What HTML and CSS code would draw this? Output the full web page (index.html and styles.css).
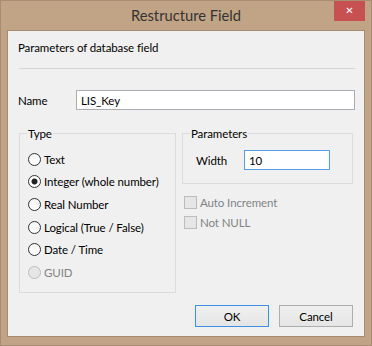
FILE: index.html
```html
<!DOCTYPE html>
<html>
<head>
    <title>Restructure Field</title>
    <link rel="stylesheet" href="styles.css">
</head>
<body>
    <div class="window">
        <div class="titlebar">
            <span class="title">Restructure Field</span>
            <span class="close-btn">&#x2715;</span>
        </div>
        <div class="client">
            <div class="heading">Parameters of database field</div>
            <div class="separator"></div>

            <div class="name-row">
                <label class="name-label" for="fieldName">Name</label>
                <input class="text-input" type="text" id="fieldName" value="LIS_Key">
            </div>

            <div class="groups">
                <!-- Field type -->
                <fieldset class="group type-group">
                    <legend>Type</legend>
                    <label class="option"><input type="radio" name="ftype"> Text</label>
                    <label class="option"><input type="radio" name="ftype" checked> Integer (whole number)</label>
                    <label class="option"><input type="radio" name="ftype"> Real Number</label>
                    <label class="option"><input type="radio" name="ftype"> Logical (True / False)</label>
                    <label class="option"><input type="radio" name="ftype"> Date / Time</label>
                    <label class="option disabled"><input type="radio" name="ftype" disabled> GUID</label>
                </fieldset>

                <div class="right-col">
                    <fieldset class="group params-group">
                        <legend>Parameters</legend>
                        <div class="width-row">
                            <label class="width-label" for="fieldWidth">Width</label>
                            <input class="text-input width-input" type="text" id="fieldWidth" value="10">
                        </div>
                    </fieldset>
                    <div class="checks">
                        <label class="check disabled"><input type="checkbox" disabled> Auto Increment</label>
                        <label class="check disabled"><input type="checkbox" disabled> Not NULL</label>
                    </div>
                </div>
            </div>

            <div class="buttons">
                <button class="btn btn-default">OK</button>
                <button class="btn">Cancel</button>
            </div>
        </div>
    </div>
</body>
</html>
```

FILE: styles.css
```css
body {
    margin: 0;
    padding: 0;
    font-family: Lato, "Noto Sans", sans-serif;
    font-size: 11.5px;
    letter-spacing: -0.1px;
    color: #000;
}

/* Window frame */
.window {
    width: 372px;
    height: 346px;
    box-sizing: border-box;
    background-color: #c1a386;
    border: 1px solid #a88d72;
    padding: 0 6px 8px 6px;
    display: flex;
    flex-direction: column;
}

.titlebar {
    height: 29px;
    position: relative;
    text-align: center;
}

.title {
    font-size: 14.7px;
    letter-spacing: 0;
    line-height: 29px;
    color: #333;
}

.close-btn {
    position: absolute;
    top: 0;
    right: 0;
    width: 31px;
    height: 20px;
    background-color: #c75050;
    color: #fff;
    font-family: "DejaVu Sans", sans-serif;
    font-size: 10px;
    font-weight: bold;
    line-height: 20px;
    text-align: center;
}

/* Client area */
.client {
    flex: 1;
    background-color: #f0f0f0;
    border: 1px solid #a58b70;
    display: flex;
    flex-direction: column;
}

.heading {
    margin: 9px 0 0 10px;
    line-height: 16px;
}

.separator {
    margin: 12px 9px 0 11px;
    border-top: 1px solid #d5d5d5;
}

.name-row {
    display: flex;
    align-items: center;
    margin: 21px 9px 0 10px;
}

.name-label {
    width: 58px;
}

.text-input {
    box-sizing: border-box;
    height: 20px;
    border: 1px solid #abadb3;
    background: #fff;
    padding: 0 4px;
    font-family: inherit;
    font-size: 11.5px;
    letter-spacing: -0.1px;
    color: #000;
    outline: none;
}

.name-row .text-input {
    flex: 1;
}

/* Group boxes */
.groups {
    display: grid;
    grid-template-columns: 157px 171px;
    column-gap: 6px;
    align-items: start;
    margin: 16px 0 0 11px;
}

.group {
    margin: 0;
    border: 1px solid #dcdcdc;
    min-width: 0;
}

.group legend {
    padding: 0 1px;
    margin-left: -1px;
    line-height: 15px;
    color: #000;
}

.type-group {
    padding: 7px 4px 8px 8px;
}

.option, .check {
    display: flex;
    align-items: center;
    white-space: nowrap;
}

.option {
    height: 22.6px;
}

.option input, .check input {
    -webkit-appearance: none;
    appearance: none;
    box-sizing: border-box;
    width: 13px;
    height: 13px;
    margin: 0 3px 0 0;
    flex: none;
}

.option input {
    border: 1px solid #333;
    border-radius: 50%;
    background: linear-gradient(#f4f4f4, #ffffff);
}

.option input:checked {
    background: radial-gradient(circle, #222 0, #222 2.6px, #fff 3.4px);
}

.option input:disabled {
    border-color: #bcbcbc;
    background: #e6e6e6;
}

.disabled {
    color: #838383;
}

.params-group {
    padding: 9px 4px 13px 8px;
}

.width-row {
    display: flex;
    align-items: center;
    margin-left: 5px;
}

.width-label {
    width: 48px;
}

.width-input {
    width: 86px;
    border-color: #569de5;
}

.checks {
    margin-top: 8px;
    padding-left: 2px;
}

.check {
    height: 20px;
}

.check input {
    border: 1px solid #bcbcbc;
    background: #e6e6e6;
}

/* Dialog buttons */
.buttons {
    margin-top: auto;
    display: flex;
    justify-content: flex-end;
    gap: 10px;
    padding: 0 11px 9px 0;
}

.btn {
    box-sizing: border-box;
    width: 74px;
    height: 22px;
    border: 1px solid #adadad;
    background: linear-gradient(#f0f0f0, #e5e5e5);
    font-family: inherit;
    font-size: 11.5px;
    letter-spacing: -0.1px;
    color: #000;
    padding: 0;
}

.btn-default {
    border-color: #3c8fe4;
}
```
